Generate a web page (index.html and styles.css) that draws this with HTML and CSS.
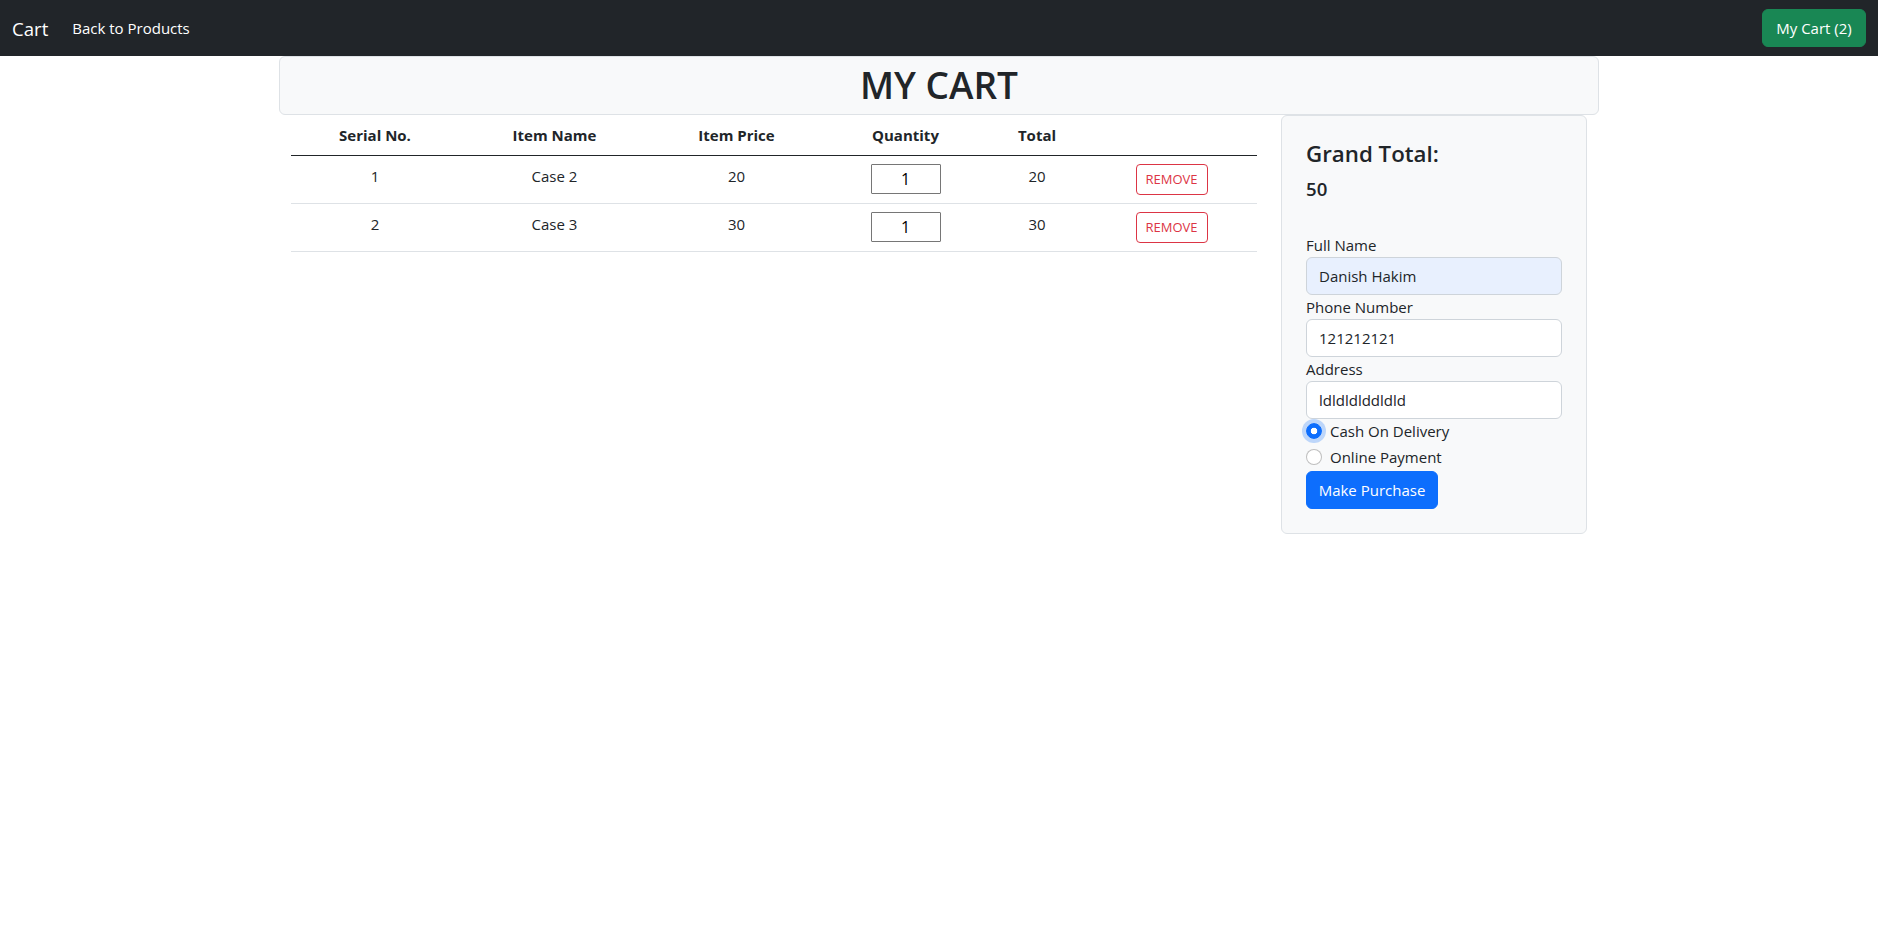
FILE: index.html
```html
<!DOCTYPE html>
<html lang="en">
<head>
<meta charset="utf-8">
<title>Cart</title>
<link rel="stylesheet" href="styles.css">
</head>
<body>
<nav class="navbar">
  <div class="nav-left">
    <a class="brand" href="#">Cart</a>
    <a class="nav-link" href="#">Back to Products</a>
  </div>
  <button class="btn btn-green" type="button">My Cart (2)</button>
</nav>

<div class="page-header">
  <h1 class="page-title">MY CART</h1>
</div>

<div class="main">
  <div class="col-left">
    <table class="cart-table">
      <colgroup>
        <col class="c1"><col class="c2"><col class="c3"><col class="c4"><col class="c5"><col class="c6">
      </colgroup>
      <thead>
        <tr>
          <th>Serial No.</th>
          <th>Item Name</th>
          <th>Item Price</th>
          <th>Quantity</th>
          <th>Total</th>
          <th></th>
        </tr>
      </thead>
      <tbody>
        <tr>
          <td>1</td>
          <td>Case 2</td>
          <td>20</td>
          <td><input class="qty" type="number" value="1"></td>
          <td>20</td>
          <td><button class="btn-remove" type="button">REMOVE</button></td>
        </tr>
        <tr>
          <td>2</td>
          <td>Case 3</td>
          <td>30</td>
          <td><input class="qty" type="number" value="1"></td>
          <td>30</td>
          <td><button class="btn-remove" type="button">REMOVE</button></td>
        </tr>
      </tbody>
    </table>
  </div>

  <div class="col-right">
    <div class="summary">
      <h4 class="grand-title">Grand Total:</h4>
      <h5 class="grand-value">50</h5>
      <form class="checkout">
        <label class="field-label" for="name">Full Name</label>
        <input class="field autofill" id="name" type="text" value="Danish Hakim">
        <label class="field-label" for="phone">Phone Number</label>
        <input class="field" id="phone" type="text" value="121212121">
        <label class="field-label" for="addr">Address</label>
        <input class="field" id="addr" type="text" value="ldldldlddldld">
        <div class="check">
          <input class="radio focused" type="radio" name="pay" id="cod" checked>
          <label for="cod">Cash On Delivery</label>
        </div>
        <div class="check">
          <input class="radio" type="radio" name="pay" id="online">
          <label for="online">Online Payment</label>
        </div>
        <button class="btn btn-blue" type="button">Make Purchase</button>
      </form>
    </div>
  </div>
</div>
</body>
</html>
```
FILE: styles.css
```css
* { box-sizing: border-box; }

body {
  margin: 0;
  font-family: "Open Sans", "Noto Sans", sans-serif;
  font-size: 15px;
  line-height: 24px;
  color: #212529;
  background: #fff;
}

a { text-decoration: none; }

/* Navbar */
.navbar {
  height: 56px;
  background: #212529;
  display: flex;
  align-items: center;
  justify-content: space-between;
  padding: 0 12px;
}
.nav-left {
  display: flex;
  align-items: center;
}
.brand {
  color: #fff;
  font-size: 18.6px;
  line-height: 30px;
  margin-right: 16px;
  padding-top: 1px;
}
.nav-link {
  color: #fff;
  font-size: 15px;
  padding: 8px;
}

.btn {
  font-family: inherit;
  font-size: 15px;
  line-height: 24px;
  height: 38px;
  padding: 6px 0;
  border-radius: 6px;
  border: 1px solid transparent;
  color: #fff;
  white-space: nowrap;
  text-align: center;
  cursor: pointer;
}
.btn-green {
  background: #198754;
  border-color: #198754;
  width: 104px;
}
.btn-blue {
  background: #0d6efd;
  border-color: #0d6efd;
  width: 132px;
  display: block;
}

/* Header */
.page-header {
  width: 1320px;
  margin: 0 auto;
  background: #f8f9fa;
  border: 1px solid #dee2e6;
  border-radius: 6px;
  padding: 4px 0 5px;
  text-align: center;
}
.page-title {
  margin: 0;
  font-size: 37px;
  line-height: 48px;
  font-weight: 600;
}

/* Main layout */
.main {
  width: 1320px;
  margin: 0 auto;
  display: flex;
  align-items: flex-start;
}
.col-left {
  width: 990px;
  padding: 0 12px;
}
.col-right {
  width: 330px;
  padding: 0 12px;
}

/* Table */
.cart-table {
  width: 966px;
  border-collapse: collapse;
  table-layout: fixed;
}
.c1 { width: 168px; }
.c2 { width: 191px; }
.c3 { width: 173px; }
.c4 { width: 165px; }
.c5 { width: 98px; }
.c6 { width: 171px; }

.cart-table th {
  font-weight: 700;
  padding: 8px;
  text-align: center;
  vertical-align: top;
  border-bottom: 1px solid #212529;
}
.cart-table td {
  padding: 8px;
  text-align: center;
  vertical-align: top;
  border-bottom: 1px solid #dee2e6;
}
.qty {
  width: 70px;
  height: 30px;
  border: 1px solid #767676;
  border-radius: 1px;
  padding: 0;
  text-align: center;
  font-family: inherit;
  font-size: 16px;
  color: #000;
  background: #fff;
  -moz-appearance: textfield;
}
.qty::-webkit-outer-spin-button,
.qty::-webkit-inner-spin-button {
  -webkit-appearance: none;
  margin: 0;
}
.btn-remove {
  font-family: inherit;
  font-size: 13px;
  line-height: 21px;
  height: 31px;
  width: 72px;
  padding: 4px 0;
  border: 1px solid #dc3545;
  border-radius: 4px;
  background: transparent;
  color: #dc3545;
  cursor: pointer;
}

/* Summary card */
.summary {
  background: #f8f9fa;
  border: 1px solid #dee2e6;
  border-radius: 6px;
  padding: 24px;
}
.grand-title {
  margin: 0 0 8px;
  font-size: 22.3px;
  line-height: 28.8px;
  font-weight: 600;
}
.grand-value {
  margin: 0 0 32px;
  font-size: 18.6px;
  line-height: 24px;
  font-weight: 600;
}
.checkout {
  margin: 0;
}
.field-label {
  display: block;
  line-height: 24px;
}
.field {
  display: block;
  width: 100%;
  height: 38px;
  padding: 6px 12px;
  border: 1px solid #ced4da;
  border-radius: 6px;
  background: #fff;
  font-family: inherit;
  font-size: 15px;
  line-height: 24px;
  color: #212529;
}
.field.autofill {
  background: #e8f0fe;
}
.check {
  min-height: 24px;
  padding-left: 24px;
  margin-bottom: 2px;
  display: flex;
  align-items: flex-start;
}
.check label {
  line-height: 24px;
}
.radio {
  -webkit-appearance: none;
  appearance: none;
  width: 16px;
  height: 16px;
  margin: 4px 0 0 -24px;
  margin-right: 8px;
  flex: 0 0 16px;
  border: 1px solid rgba(0, 0, 0, 0.25);
  border-radius: 50%;
  background: #fff;
}
.radio:checked {
  background: radial-gradient(circle, #fff 0 3px, #0d6efd 3.6px);
  border-color: #0d6efd;
}
.radio.focused {
  box-shadow: 0 0 0 4px rgba(13, 110, 253, 0.25);
}
```
